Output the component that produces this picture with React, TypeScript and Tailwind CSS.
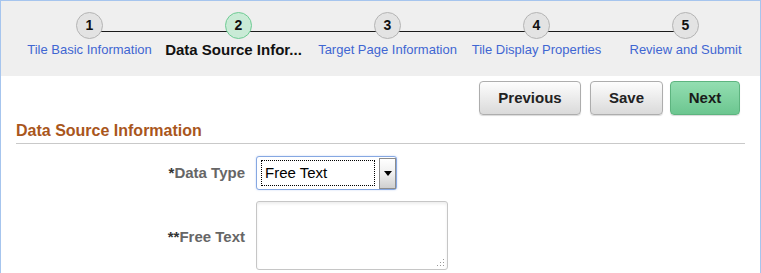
const steps = [
  { n: 1, label: "Tile Basic Information", active: false },
  { n: 2, label: "Data Source Infor...", active: true },
  { n: 3, label: "Target Page Information", active: false },
  { n: 4, label: "Tile Display Properties", active: false },
  { n: 5, label: "Review and Submit", active: false },
];

function ResizeGrip() {
  return (
    <svg width="9" height="9" viewBox="0 0 9 9" className="absolute right-[2px] bottom-[2px]">
      <rect x="7" y="1" width="1" height="1" fill="#9a9a9a" />
      <rect x="4" y="4" width="1" height="1" fill="#9a9a9a" />
      <rect x="7" y="4" width="1" height="1" fill="#9a9a9a" />
      <rect x="1" y="7" width="1" height="1" fill="#9a9a9a" />
      <rect x="4" y="7" width="1" height="1" fill="#9a9a9a" />
      <rect x="7" y="7" width="1" height="1" fill="#9a9a9a" />
    </svg>
  );
}

export default function App() {
  return (
    <div className="w-[761px] h-[273px] overflow-hidden border-x border-t border-[#a6c5ee] bg-white font-['Liberation_Sans',Arial,sans-serif]">
      {/* step train */}
      <div className="h-[75px] bg-[#efefef] pl-[14px] pt-[11px]">
        <div className="relative flex">
          <div className="absolute left-[75px] top-[19px] w-[596px] h-px bg-[#1a1a1a]" />
          {steps.map((s) => (
            <div key={s.n} className="relative w-[149px] flex flex-col items-center">
              <div
                className={`w-[27px] h-[27px] rounded-full border flex items-center justify-center text-[14px] font-bold text-[#111] ${
                  s.active ? "bg-[#c9ebd6] border-[#6fcb94]" : "bg-[#e3e3e3] border-[#b4b4b4]"
                }`}
              >
                {s.n}
              </div>
              <div className="mt-[2px] h-[18px] flex items-center whitespace-nowrap">
                {s.active ? (
                  <span className="pr-[10px] text-[15px] font-bold text-[#111]">{s.label}</span>
                ) : (
                  <span className="text-[13px] text-[#3f66d2]">{s.label}</span>
                )}
              </div>
            </div>
          ))}
        </div>
      </div>

      {/* buttons */}
      <div className="mt-[5px] flex justify-end pr-[20px]">
        <button className="w-[102px] h-[34px] rounded-[4px] border border-[#adadad] bg-gradient-to-b from-[#fdfdfd] to-[#dadada] shadow-[0_1px_1px_rgba(0,0,0,0.15)] text-[15px] font-bold text-[#222]">
          Previous
        </button>
        <button className="ml-[9px] w-[73px] h-[34px] rounded-[4px] border border-[#adadad] bg-gradient-to-b from-[#fdfdfd] to-[#dadada] shadow-[0_1px_1px_rgba(0,0,0,0.15)] text-[15px] font-bold text-[#222]">
          Save
        </button>
        <button className="ml-[7px] w-[70px] h-[34px] rounded-[4px] border border-[#5db47f] bg-gradient-to-b from-[#93deb1] to-[#6cc690] shadow-[0_1px_1px_rgba(0,0,0,0.15)] text-[15px] font-bold text-[#1a1a1a]">
          Next
        </button>
      </div>

      {/* section heading */}
      <div className="mx-[15px] mt-[7px] pb-[3px] border-b border-[#c9c9c9]">
        <h2 className="text-[16px] leading-[18px] font-bold text-[#a9561c]">Data Source Information</h2>
      </div>

      {/* form */}
      <div className="mt-[12px] flex flex-col gap-[11px]">
        <div className="flex items-center">
          <label className="w-[244px] text-right text-[15px] font-bold text-[#666]">
            <span className="text-[#333]">*</span>Data Type
          </label>
          <div className="ml-[11px] w-[141px] h-[34px] rounded-[3px] border border-[#86a8e2] shadow-[0_0_2px_rgba(80,130,220,0.35)] bg-white flex items-center pl-[4px]">
            <div className="w-[114px] h-[26px] border border-dotted border-black flex items-center pl-[3px] text-[15px] text-black">
              Free Text
            </div>
            <div className="ml-[4px] w-[17px] h-[31px] border border-[#8c8c8c] bg-gradient-to-b from-[#ffffff] via-[#efefef] to-[#cfcfcf] flex items-center justify-center">
              <svg width="8" height="5" viewBox="0 0 8 5">
                <path d="M0 0 H8 L4 5 Z" fill="#000" />
              </svg>
            </div>
          </div>
        </div>

        <div className="flex items-center">
          <label className="w-[244px] pt-[3px] text-right text-[15px] font-bold text-[#666]">
            <span className="text-[#333]">**</span>Free Text
          </label>
          <div className="relative ml-[11px] w-[192px] h-[69px] rounded-[3px] border border-[#c6c6c6] bg-white shadow-[inset_0_2px_3px_rgba(0,0,0,0.07)]">
            <ResizeGrip />
          </div>
        </div>
      </div>
    </div>
  );
}
